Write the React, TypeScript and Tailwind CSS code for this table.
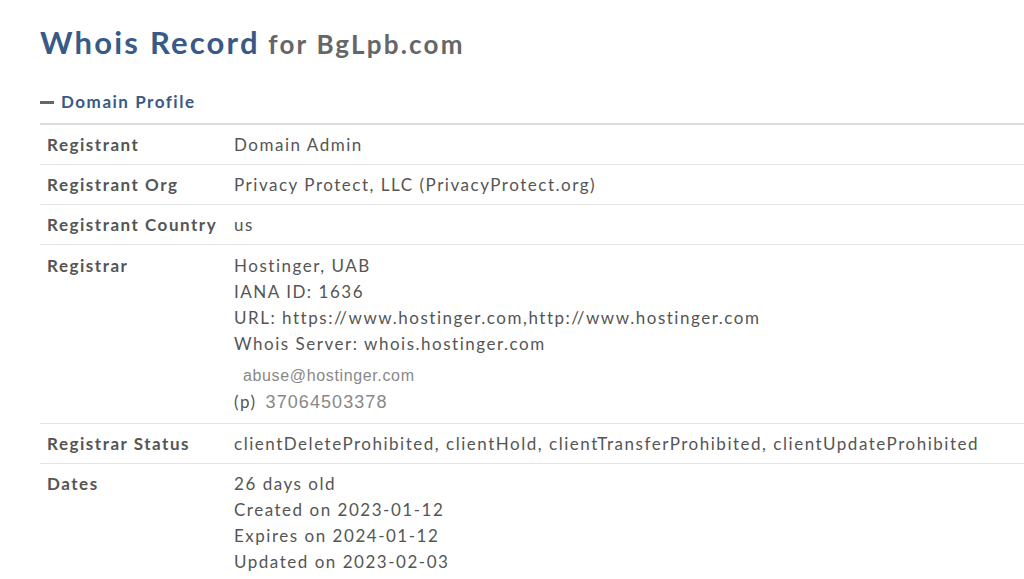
import React from 'react';

const rows: { label: string; lines: React.ReactNode[] }[] = [
  { label: 'Registrant', lines: ['Domain Admin'] },
  { label: 'Registrant Org', lines: ['Privacy Protect, LLC (PrivacyProtect.org)'] },
  { label: 'Registrant Country', lines: ['us'] },
];

export default function App() {
  return (
    <div className="bg-white min-h-screen pl-[40px] pt-[22px] text-[#555] tracking-[0.095em] font-['Lato','Liberation_Sans',sans-serif] overflow-hidden">
      <h1 className="font-bold leading-[40px]">
        <span className="text-[31px] tracking-[0.071em] text-[#385a86]">Whois Record</span>
        <span className="text-[26px] tracking-[0.085em] text-[#666]"> for BgLpb.com</span>
      </h1>

      <div className="mt-[21px] flex items-center gap-[7px] text-[17px] font-bold text-[#385a86] leading-[26px]">
        <span className="inline-block w-[14px] h-[3px] bg-[#666]" />
        <span>Domain Profile</span>
      </div>

      <table className="mt-[8px] w-[1000px] border-t-2 border-[#ddd] text-[17px] leading-[26px]">
        <tbody>
          {rows.map((r) => (
            <tr key={r.label} className="border-b border-[#e3e3e3]">
              <td className="w-[194px] px-[7px] pt-[7px] pb-[6px] align-top font-bold">{r.label}</td>
              <td className="pt-[7px] pb-[6px] align-top">{r.lines}</td>
            </tr>
          ))}
          <tr className="border-b border-[#e3e3e3]">
            <td className="px-[7px] pt-[8px] pb-[8px] align-top font-bold">Registrar</td>
            <td className="pt-[8px] pb-[8px] align-top">
              <div>Hostinger, UAB</div>
              <div>IANA ID: 1636</div>
              <div>URL: https://www.hostinger.com,http://www.hostinger.com</div>
              <div>Whois Server: whois.hostinger.com</div>
              <div className="mt-[6px] pl-[9px] text-[16px] tracking-[0.04em] text-[#888] font-['Liberation_Sans',sans-serif] leading-[26px]">
                abuse@hostinger.com
              </div>
              <div className="flex items-baseline gap-[9px]">
                <span>(p)</span>
                <span className="text-[18px] tracking-[0.06em] text-[#888] font-['Liberation_Sans',sans-serif]">37064503378</span>
              </div>
            </td>
          </tr>
          <tr className="border-b border-[#e3e3e3]">
            <td className="px-[7px] pt-[7px] pb-[6px] align-top font-bold">Registrar Status</td>
            <td className="pt-[7px] pb-[6px] align-top">
              clientDeleteProhibited, clientHold, clientTransferProhibited, clientUpdateProhibited
            </td>
          </tr>
          <tr>
            <td className="px-[7px] pt-[7px] pb-[6px] align-top font-bold">Dates</td>
            <td className="pt-[7px] pb-[6px] align-top">
              <div>26 days old</div>
              <div>Created on 2023-01-12</div>
              <div>Expires on 2024-01-12</div>
              <div>Updated on 2023-02-03</div>
            </td>
          </tr>
        </tbody>
      </table>
    </div>
  );
}
